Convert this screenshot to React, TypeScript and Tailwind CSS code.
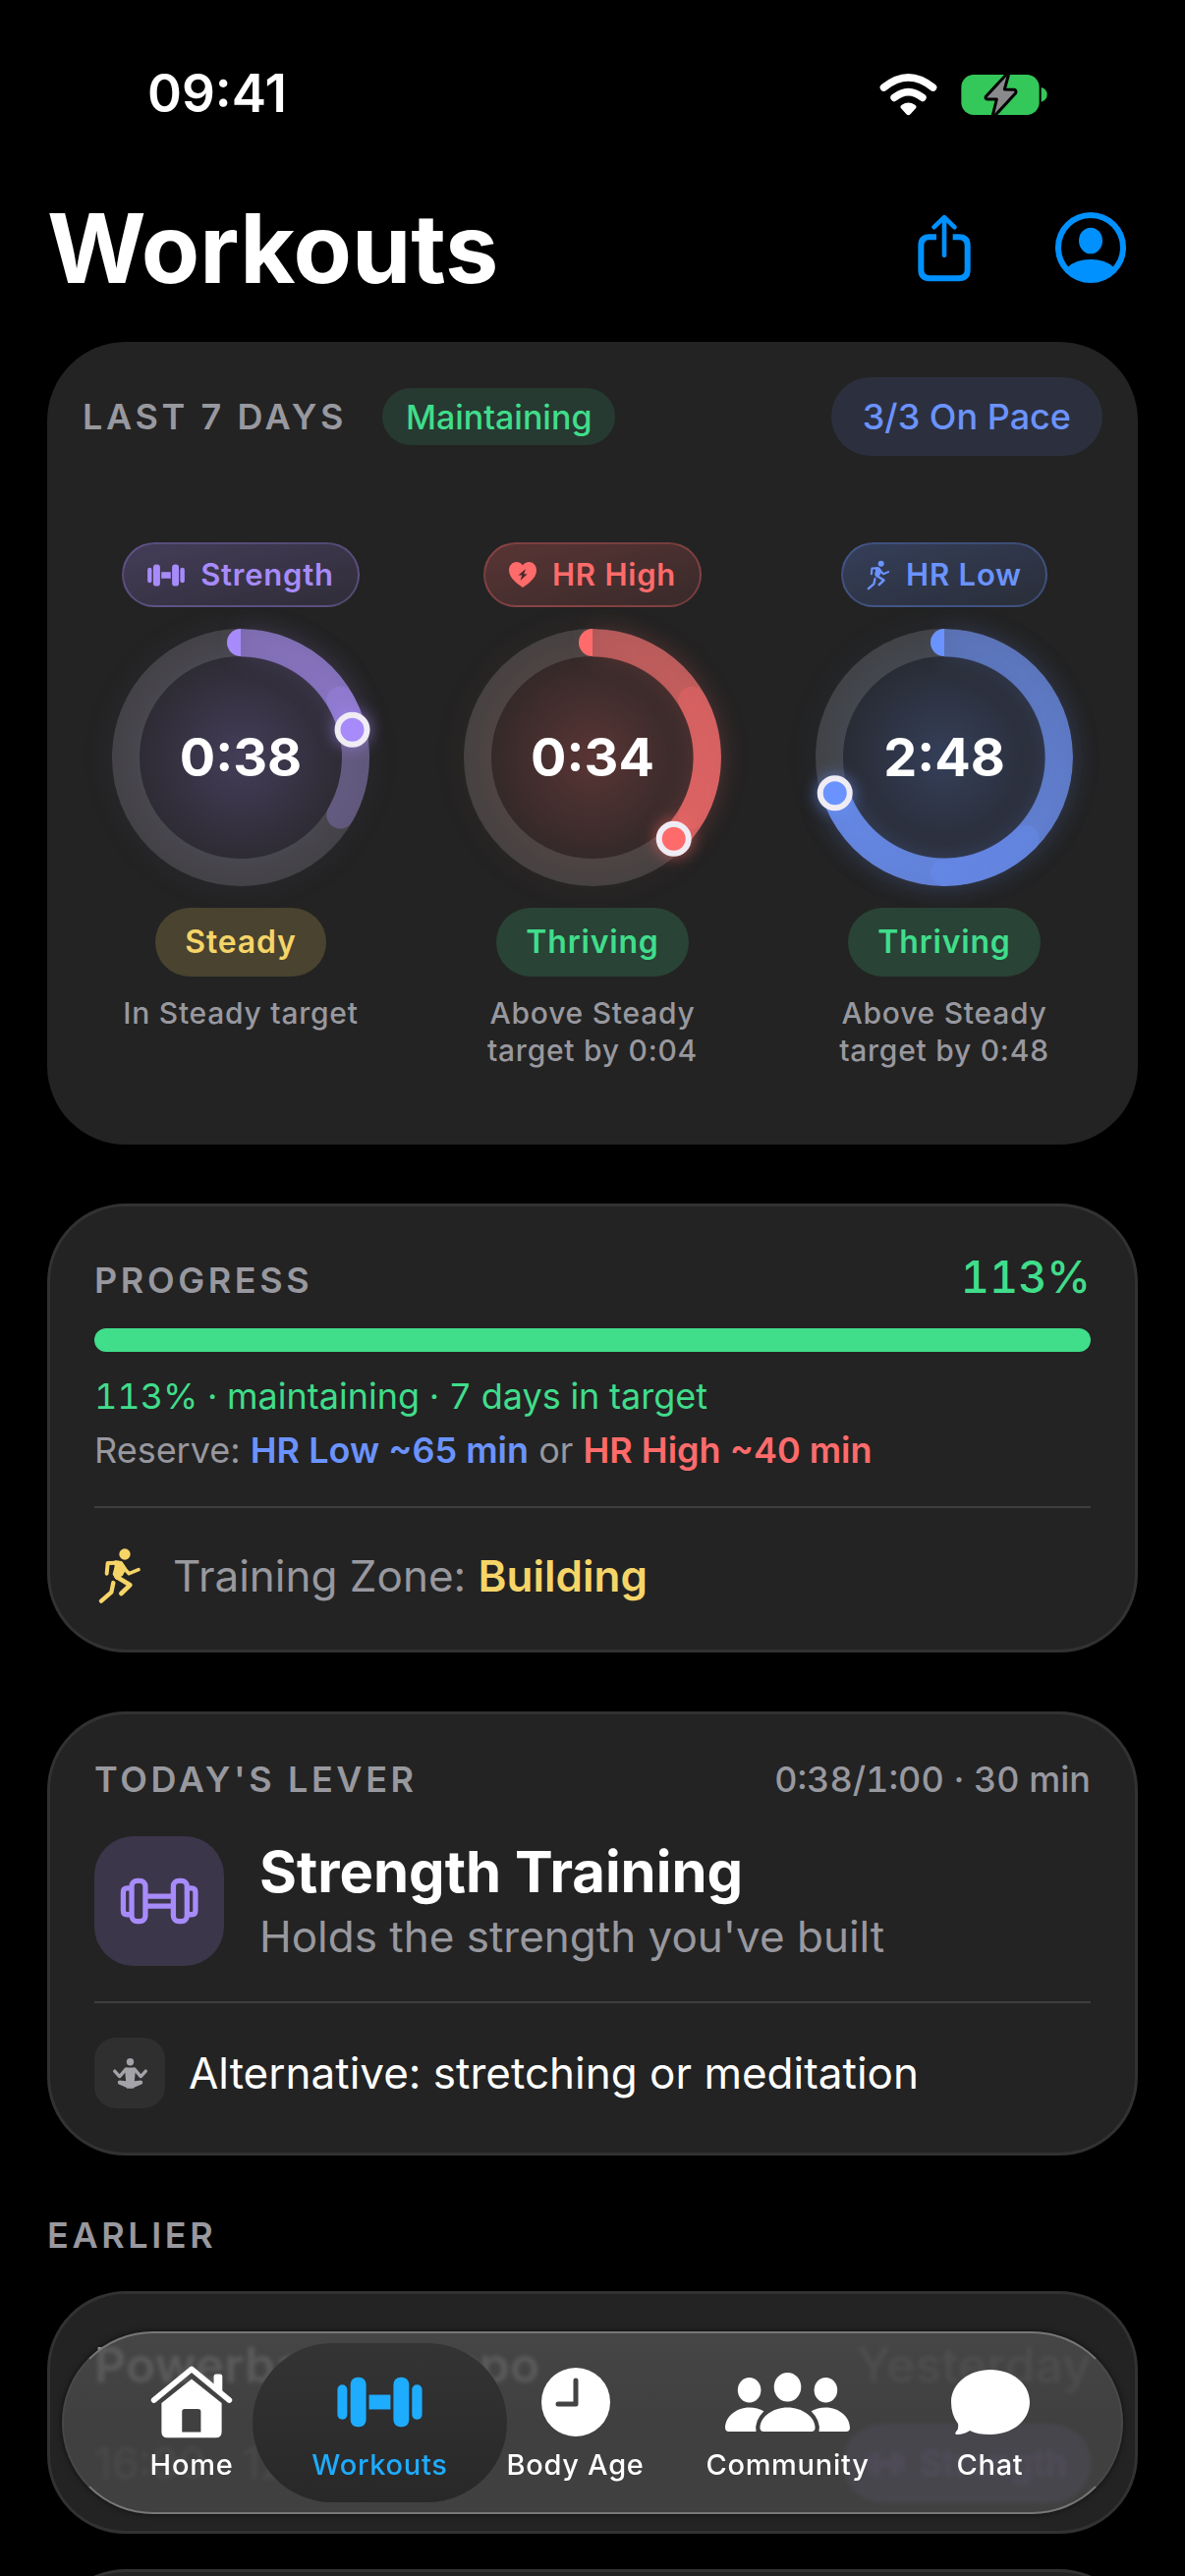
import type { ReactNode } from "react";
import clsx from "clsx";

type IconProps = { className?: string };

function WifiIcon({ className }: IconProps) {
  return (
    <svg viewBox="44 46 176 132" className={className} fill="none">
      <path d="M57 91Q132 30 207 91" stroke="currentColor" strokeWidth="23" strokeLinecap="round" />
      <path d="M89 122Q132 88 175 122" stroke="currentColor" strokeWidth="23" strokeLinecap="round" />
      <path d="M111 156Q104 149 112 144Q132 131 152 144Q160 149 153 156L138 173Q132 179 126 173Z" fill="currentColor" />
    </svg>
  );
}

function BatteryIcon({ className }: IconProps) {
  return (
    <svg viewBox="293 45 264 129" className={className}>
      <rect x="294" y="48" width="238" height="123" rx="38" fill="#34c759" />
      <path d="M538 87Q556 92 556 109Q556 126 538 131Z" fill="#34c759" />
      <path
        d="M431 48L369 115Q366 122 374 123L402 123L390 172L396 174L460 104Q463 95 455 94L426 93L438 50Z"
        fill="#8a8a8c"
        stroke="#000"
        strokeWidth="9"
        strokeLinejoin="round"
      />
    </svg>
  );
}

function ShareIcon({ className }: IconProps) {
  return (
    <svg viewBox="100 60 162 206" className={className} fill="none" stroke="currentColor">
      <path
        d="M157 129H136Q110 129 110 155V229Q110 255 136 255H226Q252 255 252 229V155Q252 129 226 129H207"
        strokeWidth="18"
      />
      <path d="M181 185V74M150 99L181 69L212 99" strokeWidth="14" strokeLinecap="round" strokeLinejoin="round" />
    </svg>
  );
}

function ProfileIcon({ className }: IconProps) {
  return (
    <svg viewBox="522 48 216 216" className={className}>
      <circle cx="630" cy="156" r="99" fill="none" stroke="currentColor" strokeWidth="18" />
      <ellipse cx="630" cy="135" rx="36" ry="40" fill="currentColor" />
      <path d="M560 216Q585 192 630 192Q675 192 700 216L690 236Q664 260 630 260Q596 260 570 236Z" fill="currentColor" />
    </svg>
  );
}

function DumbbellIcon({ className }: IconProps) {
  return (
    <svg viewBox="850 160 262 157" className={className} fill="currentColor">
      <rect x="851" y="185" width="30" height="107" rx="15" />
      <rect x="891" y="162" width="48" height="153" rx="22" />
      <rect x="948" y="216" width="66" height="45" />
      <rect x="1023" y="162" width="48" height="153" rx="22" />
      <rect x="1080" y="185" width="31" height="107" rx="15" />
    </svg>
  );
}

function DumbbellOutlineIcon({ className }: IconProps) {
  return (
    <svg viewBox="94 154 241 145" className={className} fill="none" stroke="currentColor" strokeWidth="16">
      <rect x="130" y="164" width="42" height="125" rx="17" />
      <rect x="258" y="164" width="42" height="125" rx="17" />
      <path d="M124 187H116Q104 187 104 199V256Q104 268 116 268H124" />
      <path d="M306 187H314Q326 187 326 199V256Q326 268 314 268H306" />
      <path d="M178 212H252M178 242H252" />
    </svg>
  );
}

function RunnerIcon({ className }: IconProps) {
  return (
    <svg viewBox="34 40 132 174" className={className} fill="none" stroke="currentColor" strokeLinecap="round" strokeLinejoin="round">
      <circle cx="115" cy="61" r="17" fill="currentColor" stroke="none" />
      <path d="M60 120L63 88L95 87" strokeWidth="12" />
      <path d="M86 84L104 86L116 104L105 124L90 134L82 122L88 98Z" fill="currentColor" strokeWidth="8" />
      <path d="M106 96L128 120L157 108" strokeWidth="11" />
      <path d="M90 130L131 155L104 181" strokeWidth="14" />
      <path d="M80 148L74 177L43 204" strokeWidth="13" />
    </svg>
  );
}

function HeartBoltIcon({ className }: IconProps) {
  return (
    <svg viewBox="0 0 28 26" className={className}>
      <path d="M14 26C10 23 0 17 0 8.500C0 3.500 3.500 0 7.500 0C10.300 0 12.700 1.300 14 3.600C15.300 1.300 17.700 0 20.500 0C24.500 0 28 3.500 28 8.500C28 17 18 23 14 26Z" fill="currentColor" />
      <path d="M17 7L9.500 13.500H13.200L11.500 19L18.700 12.200H15.200Z" fill="#452b2d" />
    </svg>
  );
}

function MeditationIcon({ className }: IconProps) {
  return (
    <svg viewBox="70 702 110 98" className={className} fill="currentColor">
      <circle cx="125" cy="716" r="11" />
      <path d="M78 744L93 760L112 738M172 744L157 760L138 738" fill="none" stroke="currentColor" strokeWidth="10" strokeLinecap="round" strokeLinejoin="round" />
      <path d="M112 733H138L141 742L138 774L157 772Q166 775 161 783L137 793Q135 798 125 796Q115 798 113 793L89 783Q84 775 93 772L112 774L109 742Z" />
    </svg>
  );
}

function HomeIcon({ className }: IconProps) {
  return (
    <svg viewBox="283 130 248 220" className={className} fill="currentColor">
      <path d="M474 205V162Q474 155 481 155H493Q500 155 500 162V215Z" />
      <path d="M293 234L407 140L521 234" fill="none" stroke="currentColor" strokeWidth="17" strokeLinecap="round" strokeLinejoin="round" />
      <path
        fillRule="evenodd"
        d="M316 243L407 170L498 243V330Q498 348 480 348H334Q316 348 316 330ZM378 269V331H435V269Q435 261 427 261H386Q378 261 378 269Z"
      />
    </svg>
  );
}

function ClockIcon({ className }: IconProps) {
  return (
    <svg viewBox="0 0 70 70" className={className} fill="none">
      <circle cx="35" cy="35" r="35" fill="currentColor" />
      <path d="M35 13V37H17" stroke="#434343" strokeWidth="5" strokeLinecap="round" strokeLinejoin="round" />
    </svg>
  );
}

function CommunityIcon({ className }: IconProps) {
  return (
    <svg viewBox="137 103 131 64" className={className} fill="currentColor">
      <ellipse cx="163" cy="122" rx="12" ry="13" />
      <ellipse cx="202.500" cy="119" rx="14" ry="15" />
      <ellipse cx="242" cy="122" rx="12" ry="13" />
      <path d="M178 144Q172 140 163 140C149 140 138 150 138 161Q138 165 142 165H170Q168 154 178 144Z" />
      <path d="M227 144Q233 140 242 140C256 140 267 150 267 161Q267 165 263 165H235Q237 154 227 144Z" />
      <path d="M178 165Q174 165 174 161C174 150 187 140 202.500 140C218 140 231 150 231 161Q231 165 227 165Z" />
    </svg>
  );
}

function ChatIcon({ className }: IconProps) {
  return (
    <svg viewBox="0 0 80 66" className={className} fill="currentColor">
      <path d="M40 0C62 0 80 14 80 33S62 66 40 66C32 66 25 65 19 62Q13 66 6 66Q3 66 5 63Q8 60 7 55Q0 46 0 33C0 14 18 0 40 0Z" />
    </svg>
  );
}

type Metric = {
  name: string;
  time: string;
  status: "Steady" | "Thriving";
  note: ReactNode;
  color: string;
  icon: ReactNode;
  angle: number;
  zone: [number, number];
  chip: string;
};

const metrics: Metric[] = [
  {
    name: "Strength",
    time: "0:38",
    status: "Steady",
    note: "In Steady target",
    color: "#a78bfa",
    icon: <DumbbellIcon className="h-[23px] w-[38px]" />,
    angle: 76,
    zone: [60, 120],
    chip: "text-[#a78bfa] border-[#a78bfa]/30 from-[#a78bfa]/25 to-[#a78bfa]/10",
  },
  {
    name: "HR High",
    time: "0:34",
    status: "Thriving",
    note: (
      <>
        Above Steady
        <br />
        target by 0:04
      </>
    ),
    color: "#ff6b6b",
    icon: <HeartBoltIcon className="h-[26px] w-[28px]" />,
    angle: 135,
    zone: [60, 120],
    chip: "text-[#ff6b6b] border-[#ff6b6b]/30 from-[#ff6b6b]/25 to-[#ff6b6b]/10",
  },
  {
    name: "HR Low",
    time: "2:48",
    status: "Thriving",
    note: (
      <>
        Above Steady
        <br />
        target by 0:48
      </>
    ),
    color: "#6b93ff",
    icon: <RunnerIcon className="h-[31px] w-[24px]" />,
    angle: 252,
    zone: [135, 180],
    chip: "text-[#6b93ff] border-[#6b93ff]/30 from-[#6b93ff]/25 to-[#6b93ff]/10",
  },
];

const R = 117;

function polar(deg: number) {
  const rad = ((deg - 90) * Math.PI) / 180;
  return [131 + R * Math.cos(rad), 131 + R * Math.sin(rad)];
}

function arc(from: number, to: number) {
  const [x1, y1] = polar(from);
  const [x2, y2] = polar(to);
  return `M${x1} ${y1}A${R} ${R} 0 ${to - from > 180 ? 1 : 0} 1 ${x2} ${y2}`;
}

function Ring({ metric }: { metric: Metric }) {
  const { color, angle, zone, time } = metric;
  const [dotX, dotY] = polar(angle);
  // the arc gets denser the further round it goes
  const endAlpha = Math.round(140 + (angle / 360) * 100).toString(16);
  return (
    <div className="relative grid size-[262px] place-items-center rounded-full">
      <div
        className="absolute inset-0 rounded-full"
        style={{ background: `radial-gradient(circle closest-side, ${color}40 0%, ${color}14 80%, ${color}0a 100%)`, boxShadow: `0 0 40px ${color}0d` }}
      />
      <svg viewBox="0 0 262 262" className="absolute inset-0 size-full overflow-visible" fill="none">
        <circle cx="131" cy="131" r={R} stroke="#fff" strokeOpacity="0.13" strokeWidth="28" />
      </svg>
      <div className="absolute inset-0" style={{ filter: `drop-shadow(0 0 12px ${color}4d)` }}>
        <div
          className="size-full rounded-full [mask-image:radial-gradient(circle,transparent_102px,#000_103px)]"
          style={{ background: `conic-gradient(${color}8c 0deg, ${color}${endAlpha} ${angle}deg, transparent ${angle}deg)` }}
        />
      </div>
      <svg viewBox="0 0 262 262" className="absolute inset-0 size-full overflow-visible" fill="none">
        <path d="M131 0V28A14 14 0 0 1 131 0Z" fill={color} />
        <path d={arc(zone[0], zone[1])} stroke={color} strokeOpacity="0.3" strokeWidth="28" strokeLinecap="round" />
        <circle cx={dotX} cy={dotY} r="15" fill={color} stroke="#efecf4" strokeWidth="6" style={{ filter: `drop-shadow(0 0 8px ${color}99)` }} />
      </svg>
      <span className="relative text-[54px] leading-none font-bold">{time}</span>
    </div>
  );
}

function MetricColumn({ metric }: { metric: Metric }) {
  return (
    <div className="flex flex-col items-center">
      <div className={clsx("flex h-[66px] items-center gap-4 rounded-full border-2 bg-linear-to-br px-6 text-[31px] font-semibold tracking-wide", metric.chip)}>
        {metric.icon}
        {metric.name}
      </div>
      <div className="mt-[22px]">
        <Ring metric={metric} />
      </div>
      <div
        className={clsx(
          "mt-[22px] flex h-[70px] items-center rounded-full px-[30px] text-[32px] font-semibold tracking-wide",
          metric.status === "Steady" ? "bg-[#49432f] text-[#f6d568]" : "bg-[#294336] text-[#40dd8b]"
        )}
      >
        {metric.status}
      </div>
      <p className="mt-[18px] text-center text-[30px] leading-[38px] font-medium tracking-wide text-[#98989f]">{metric.note}</p>
    </div>
  );
}

function Label({ children }: { children: ReactNode }) {
  return <h2 className="text-[36px] leading-[42px] font-semibold tracking-widest text-[#98989f]">{children}</h2>;
}

const tabs = [
  { name: "Home", icon: <HomeIcon className="h-[74px] w-[84px]" /> },
  { name: "Workouts", icon: <DumbbellIcon className="h-[52px] w-[87px]" />, active: true },
  { name: "Body Age", icon: <ClockIcon className="size-[70px]" /> },
  { name: "Community", icon: <CommunityIcon className="h-[63px] w-[129px]" /> },
  { name: "Chat", icon: <ChatIcon className="h-[66px] w-[80px]" /> },
];

function TabBar() {
  return (
    <nav className="fixed inset-x-[63px] bottom-[63px] grid h-[186px] grid-cols-[180fr_203fr_195fr_237fr_175fr] rounded-full border-2 border-x-[#555]/40 border-y-[#777] bg-linear-to-b from-[#4c4c4c]/85 via-[#454545]/85 to-[#464646]/85 pr-[46px] pl-10 shadow-[0_0_6px_rgba(0,0,0,0.6)] backdrop-blur-[2px]">
      {tabs.map((tab) => (
        <a key={tab.name} href="#" className={clsx("relative flex flex-col items-center pt-8", tab.active ? "text-[#1eacff]" : "text-white")}>
          {tab.active && <span className="absolute -inset-x-7 inset-y-[10px] rounded-full bg-linear-to-b from-[#343434] to-[#282828]" />}
          <span className="relative flex h-[76px] items-center">{tab.icon}</span>
          <span className="relative mt-2 text-[29px] leading-9 font-medium tracking-wide whitespace-nowrap">{tab.name}</span>
        </a>
      ))}
    </nav>
  );
}

const card = "rounded-[80px] bg-[#232323]";
const outlined = "rounded-[80px] border-3 border-[#323232] bg-[#232323] px-[45px]";

export default function App() {
  return (
    <div className="h-screen overflow-hidden bg-black font-['Inter',sans-serif] text-white">
      <header>
        <div className="flex h-[192px] items-center justify-between pr-[140px] pl-[150px]">
          <span className="text-[53px] font-semibold">09:41</span>
          <div className="flex items-center gap-6">
            <WifiIcon className="h-[44px] w-[59px]" />
            <BatteryIcon className="h-[43px] w-[88px]" />
          </div>
        </div>
        <div className="flex h-[120px] items-center justify-between pr-[60px] pl-[48px]">
          <h1 className="text-[97px] leading-none font-bold">Workouts</h1>
          <div className="flex items-center gap-[86px] text-[#0091ff]">
            <button type="button" aria-label="Share">
              <ShareIcon className="h-[69px] w-[54px]" />
            </button>
            <button type="button" aria-label="Profile">
              <ProfileIcon className="size-[72px]" />
            </button>
          </div>
        </div>
      </header>

      <main className="mt-9 flex flex-col gap-[60px] px-12">
        <section className={clsx(card, "pb-[77px]")}>
          <div className="flex items-center px-9 pt-9">
            <Label>LAST 7 DAYS</Label>
            <span className="ml-9 flex h-[58px] items-center rounded-full bg-[#263a31] px-6 text-[34px] font-medium text-[#40dd8b]">Maintaining</span>
            <span className="ml-auto flex h-20 items-center rounded-full bg-[#2c303e] px-8 text-[36px] font-medium text-[#6b93ff]">3/3 On Pace</span>
          </div>
          <div className="mt-[88px] grid grid-cols-3 px-[18px]">
            {metrics.map((m) => (
              <MetricColumn key={m.name} metric={m} />
            ))}
          </div>
        </section>

        <section className={clsx(outlined, "pt-11 pb-[46px]")}>
          <div className="flex items-baseline justify-between">
            <Label>PROGRESS</Label>
            <span className="text-[45px] leading-[56px] font-medium text-[#40dd8b] tabular-nums">113%</span>
          </div>
          <div role="progressbar" aria-label="Progress" aria-valuenow={113} className="mt-6 h-6 rounded-full bg-[#40dd8b]" />
          <p className="mt-[18px] text-[36px] leading-[55px] text-[#40dd8b] tabular-nums">113% · maintaining · 7 days in target</p>
          <p className="text-[36px] leading-[55px] text-[#98989f]">
            Reserve: <span className="font-semibold text-[#6b93ff]">HR Low ~65 min</span> or <span className="font-semibold text-[#ff6b6b]">HR High ~40 min</span>
          </p>
          <hr className="mt-[29px] border-t-2 border-[#3e3e40]" />
          <div className="mt-10 flex items-center gap-8 pl-1 text-[#f6d568]">
            <RunnerIcon className="h-[58px] w-[44px]" />
            <p className="text-[44px] leading-[56px] text-[#98989f]">
              Training Zone: <span className="font-semibold text-[#f6d568]">Building</span>
            </p>
          </div>
        </section>

        <section className={clsx(outlined, "pt-[45px] pb-[45px]")}>
          <div className="flex items-center justify-between">
            <Label>TODAY'S LEVER</Label>
            <span className="text-[36px] leading-[42px] font-medium text-[#98989f] tabular-nums">0:38/1:00 · 30 min</span>
          </div>
          <div className="mt-[37px] flex items-center gap-9">
            <div className="grid size-[132px] shrink-0 place-items-center rounded-[40px] bg-[#3c364a] text-[#a78bfa]">
              <DumbbellOutlineIcon className="h-[48px] w-[80px]" />
            </div>
            <div>
              <h3 className="text-[58px] leading-[72px] font-bold">Strength Training</h3>
              <p className="text-[44px] leading-[60px] text-[#98989f]">Holds the strength you've built</p>
            </div>
          </div>
          <hr className="mt-9 border-t-2 border-[#3e3e40]" />
          <div className="mt-[35px] flex items-center gap-6">
            <div className="grid size-[72px] place-items-center rounded-[22px] bg-[#2f2f2f] text-[#a3a3a8]">
              <MeditationIcon className="h-[33px] w-[37px]" />
            </div>
            <p className="text-[44px] leading-[56px]">Alternative: stretching or meditation</p>
          </div>
        </section>

        <section>
          <Label>EARLIER</Label>
          <div className="mt-9 flex flex-col gap-9">
            <article className={clsx(outlined, "h-[247px] pt-9")}>
              <div className="flex justify-between text-[50px] leading-[72px] font-semibold">
                <span className="text-[#bbb]">Powerband Tempo</span>
                <span className="font-medium text-[#666]">Yesterday</span>
              </div>
              <div className="mt-6 flex items-center justify-between text-[44px] text-[#666]">
                <span>16:00 · 128 ppm</span>
                <span className="flex h-20 items-center gap-4 rounded-full bg-[#a78bfa]/40 px-6 text-[36px] font-semibold text-[#a78bfa]/60">
                  <DumbbellIcon className="h-[23px] w-[38px]" />
                  Strength
                </span>
              </div>
            </article>
            <article className={clsx(outlined, "h-[247px]")} />
          </div>
        </section>
      </main>

      <TabBar />
    </div>
  );
}
